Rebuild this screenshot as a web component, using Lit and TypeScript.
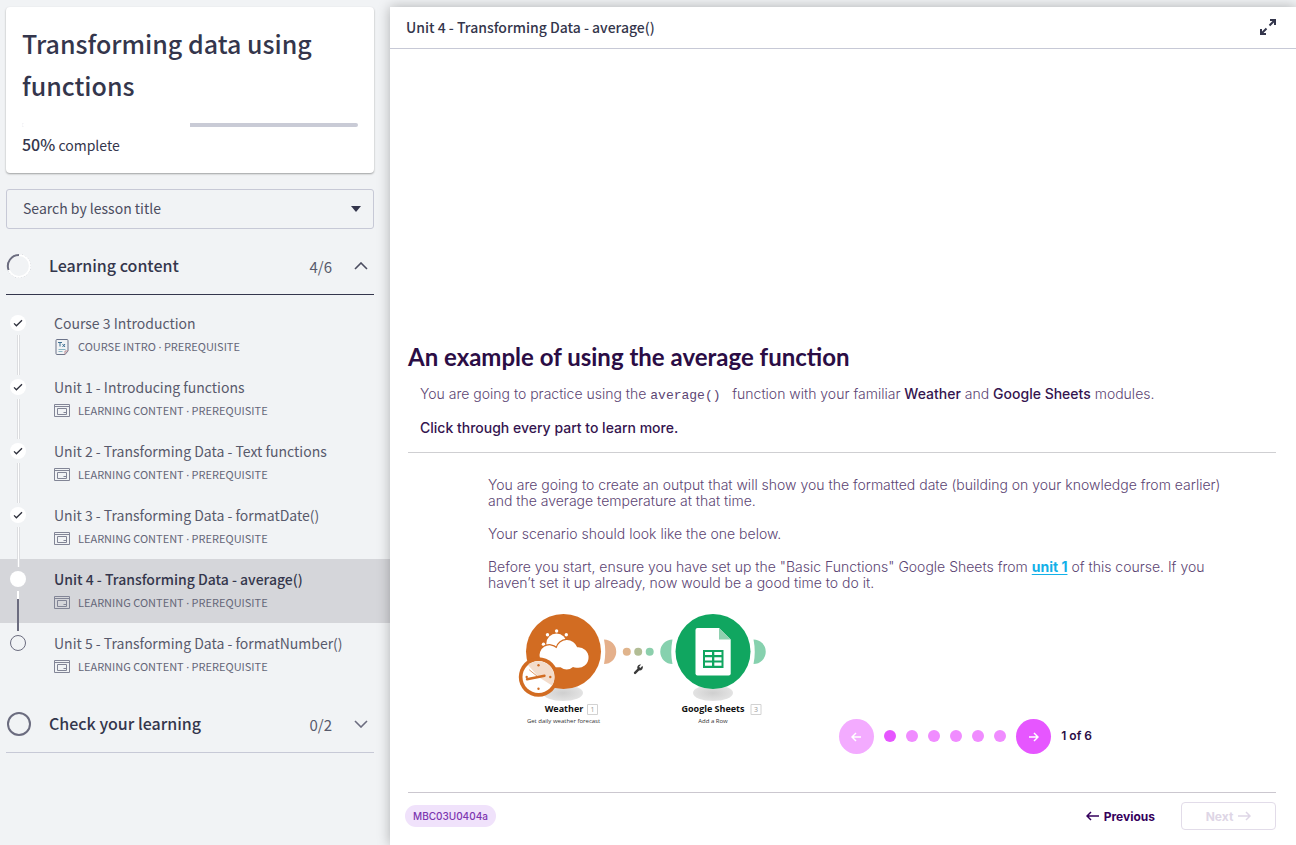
import { LitElement, html, css, svg } from "lit";
import { customElement, property, state } from "lit/decorators.js";
import { classMap } from "lit/directives/class-map.js";

type Status = "done" | "current" | "todo";

interface Lesson {
  title: string;
  kind: string;
  status: Status;
  icon: "text" | "content";
}

const LESSONS: Lesson[] = [
  { title: "Course 3 Introduction", kind: "COURSE INTRO", status: "done", icon: "text" },
  { title: "Unit 1 - Introducing functions", kind: "LEARNING CONTENT", status: "done", icon: "content" },
  { title: "Unit 2 - Transforming Data - Text functions", kind: "LEARNING CONTENT", status: "done", icon: "content" },
  { title: "Unit 3 - Transforming Data - formatDate()", kind: "LEARNING CONTENT", status: "done", icon: "content" },
  { title: "Unit 4 - Transforming Data - average()", kind: "LEARNING CONTENT", status: "current", icon: "content" },
  { title: "Unit 5 - Transforming Data - formatNumber()", kind: "LEARNING CONTENT", status: "todo", icon: "content" },
];

const textIcon = html`<svg class="kind-icon" viewBox="0 0 16 16" width="16" height="16" fill="none" stroke="#6c7389" aria-hidden="true">
  <path d="M3 .5h10q1 0 1 1V12l-3 3.500H3q-1 0-1-1V1.500q0-1 1-1z" />
  <path d="M14 12h-3v3.500" stroke="#b98a92" />
  <path d="M4 3.500h4M6 3.500V7.500M8.500 5l2.500 3M11 5L8.500 8" stroke="#3d6f92" />
  <path d="M4.500 10.500h7M4.500 12.500h4" stroke="#8bb6c4" />
</svg>`;

const contentIcon = html`<svg class="kind-icon" viewBox="0 0 16 16" width="16" height="16" fill="none" stroke="#828596" aria-hidden="true">
  <path d="M.5 1.500h15v12H.5zM.5 3.500h15" />
  <path d="M3.500 5.500h9v6h-9z" />
  <path d="M9.500 9.500h3" />
</svg>`;

@customElement("lesson-item")
class LessonItem extends LitElement {
  @property({ attribute: false }) lesson!: Lesson;
  @property({ type: Boolean }) last = false;

  static styles = css`
    :host { display: block; }
    .row {
      display: grid;
      grid-template-columns: 54px minmax(0, 1fr);
      height: 64px;
      color: #585a6c;
      text-decoration: none;
    }
    .row.current { background: #d5d6da; }
    .rail {
      display: flex;
      flex-direction: column;
      align-items: center;
      gap: 4px;
      width: 36px;
      padding-top: 12px;
      box-sizing: border-box;
    }
    .marker {
      flex: none;
      display: grid;
      place-items: center;
      width: 16px;
      height: 16px;
      border-radius: 50%;
      box-sizing: border-box;
      background: #fff;
    }
    .todo .marker { background: none; border: 1px solid #6b6c7f; }
    .line {
      flex: none;
      width: 1px;
      height: 40px;
      margin-bottom: -8px;
      border: solid #dcdde0;
      border-width: 0 1px;
      background: #fff;
    }
    .current .line {
      width: 2px;
      border: 0;
      background: linear-gradient(#fff 8px, #6b6c7f 8px);
    }
    .text { padding-top: 9px; }
    .title { font-size: 14px; line-height: 22px; }
    .current .title { font-weight: 500; color: #34364c; }
    .meta {
      display: flex;
      align-items: center;
      gap: 8px;
      margin-top: 2px;
      font-size: 11px;
      line-height: 20px;
      color: #646678;
    }
    .dot { font-family: "Noto Sans", sans-serif; }
    .kind-icon { flex: none; }
  `;

  render() {
    const l = this.lesson;
    return html`<a class=${classMap({ row: true, [l.status]: true })} href="#lesson" aria-current=${l.status === "current" ? "page" : "false"}>
      <span class="rail">
        <span class="marker">
          ${l.status === "done"
            ? html`<svg width="10" height="10" viewBox="0 0 10 10" fill="none" stroke="#2c2e3a" stroke-width="1.300" aria-hidden="true"><path d="M1 5.400l2.400 2.400L9 2.200" /></svg>`
            : ""}
        </span>
        ${this.last ? "" : html`<span class="line"></span>`}
      </span>
      <span class="text">
        <div class="title">${l.title}</div>
        <div class="meta">${l.icon === "text" ? textIcon : contentIcon}<span>${l.kind} <span class="dot">·</span> PREREQUISITE</span></div>
      </span>
    </a>`;
  }
}

@customElement("course-sidebar")
class CourseSidebar extends LitElement {
  static styles = css`
    :host { display: block; color: #34364c; }
    .card {
      margin: 7px 16px 16px 6px;
      padding: 15px 16px 17px;
      background: #fff;
      border-radius: 4px;
      box-shadow: 0 1px 2px rgba(0, 0, 0, 0.35);
    }
    h1 { margin: 0; font-size: 25px; line-height: 42px; font-weight: 500; }
    .bar {
      height: 4px;
      margin: 17px 0 7px;
      border-radius: 2px;
      background: #c9cbd6;
      overflow: hidden;
    }
    .fill { height: 100%; background: #fff; }
    .done { margin: 0; font-size: 14px; line-height: 22px; }
    .done b { font-size: 16px; line-height: 20px; font-weight: 500; }
    .search { display: grid; align-items: center; margin: 0 16px 9px 6px; }
    .search > * { grid-area: 1 / 1; }
    select {
      appearance: none;
      width: 100%;
      height: 40px;
      padding: 0 40px 2px 16px;
      font: inherit;
      font-size: 14px;
      color: #4b4d60;
      background: none;
      border: 1px solid #c7c9d6;
      border-radius: 3px;
    }
    .caret { justify-self: end; margin-right: 13px; pointer-events: none; }
    .section {
      display: grid;
      grid-template-columns: 43px minmax(0, 1fr) auto 14px;
      align-items: center;
      width: calc(100% - 22px);
      height: 57px;
      margin: 0 16px 0 6px;
      padding: 0 6px 0 0;
      border: 0;
      border-bottom: 1px solid #34364c;
      background: none;
      color: inherit;
      font: inherit;
      text-align: left;
    }
    .section.closed { border-bottom-color: #c7c9d6; }
    .name { padding-bottom: 2px; font-size: 16px; line-height: 24px; font-weight: 500; }
    .count { margin-right: 22px; font-size: 15px; color: #585a6c; }
    .lessons { list-style: none; margin: 0; padding: 8px 0 9px; }
  `;

  render() {
    return html`
      <div class="card">
        <h1>Transforming data using functions</h1>
        <div class="bar" role="progressbar" aria-label="Course progress" aria-valuenow="50"><div class="fill" style="width:50%"></div></div>
        <p class="done"><b>50%</b> complete</p>
      </div>
      <div class="search">
        <select aria-label="Search by lesson title"><option>Search by lesson title</option></select>
        <svg class="caret" width="10" height="6" viewBox="0 0 10 6" aria-hidden="true"><path d="M0 0h10L5 6z" fill="#34364c" /></svg>
      </div>
      <button class="section" aria-expanded="true">
        <svg width="26" height="26" viewBox="0 0 26 26" fill="none" aria-hidden="true">
          <circle cx="13" cy="13" r="11.500" stroke="#b9bac2" stroke-dasharray="1 2" />
          <circle cx="13" cy="13" r="10.800" stroke="#fff" stroke-width="1.800" />
          <path d="M2.600 17A11.100 11.100 0 0 1 13 2" stroke="#6b6c7f" stroke-width="2" />
        </svg>
        <span class="name">Learning content</span>
        <span class="count">4/6</span>
        <svg width="14" height="8" viewBox="0 0 14 8" fill="none" stroke="#4b4d60" stroke-width="1.600" aria-hidden="true"><path d="M1 7l6-6 6 6" /></svg>
      </button>
      <ul class="lessons">
        ${LESSONS.map((l, i) => html`<li><lesson-item .lesson=${l} ?last=${i === LESSONS.length - 1}></lesson-item></li>`)}
      </ul>
      <button class="section closed" aria-expanded="false">
        <svg width="26" height="26" viewBox="0 0 26 26" fill="none" aria-hidden="true"><circle cx="13" cy="13" r="11" stroke="#6b6c7f" stroke-width="2" /></svg>
        <span class="name">Check your learning</span>
        <span class="count">0/2</span>
        <svg width="14" height="8" viewBox="0 0 14 8" fill="none" stroke="#6b6c7f" stroke-width="1.600" aria-hidden="true"><path d="M1 1l6 6 6-6" /></svg>
      </button>
    `;
  }
}

@customElement("scenario-diagram")
class ScenarioDiagram extends LitElement {
  static styles = css`
    :host { display: block; }
    svg { display: block; }
    text { font-family: "Open Sans", sans-serif; text-anchor: middle; }
    .name { font-size: 9px; font-weight: 700; fill: #111; }
    .sub { font-size: 6px; fill: #333; }
    .num { font-size: 7px; fill: #999; }
  `;

  render() {
    return html`<svg width="270" height="120" viewBox="510 610 270 120" role="img" aria-label="Weather module connected to Google Sheets module">
      <defs>
        <radialGradient id="shade"><stop offset="0" stop-color="#cfcfcf" /><stop offset="1" stop-color="#e3e3e3" /></radialGradient>
      </defs>
      <ellipse cx="563" cy="693" rx="20" ry="8" fill="url(#shade)" />
      <ellipse cx="713" cy="693" rx="20" ry="8" fill="url(#shade)" />
      <path d="M604 639.500a12.250 12.250 0 0 1 0 24.500q2.500-12 0-24.500z" fill="#e5b08b" />
      <circle cx="626.800" cy="651.700" r="4" fill="#e0b48c" />
      <circle cx="638.200" cy="651.700" r="4" fill="#b2bd95" />
      <circle cx="649.700" cy="651.700" r="4" fill="#8ccfac" />
      <path d="M672.500 639.500a12.250 12.250 0 0 0 0 24.500q-2.500-12 0-24.500z" fill="#86d1ae" />
      <path d="M753.500 639.500a12.250 12.250 0 0 1 0 24.500q2.500-12 0-24.500z" fill="#86d1ae" />
      <circle cx="563.500" cy="651.500" r="37.500" fill="#d26c22" />
      <circle cx="713" cy="651.500" r="37.500" fill="#10a660" />
      <g fill="#fff">
        <circle cx="556.500" cy="643.700" r="10.200" />
        <circle cx="543.500" cy="644.300" r="1.700" /><circle cx="547.500" cy="634.700" r="1.700" />
        <circle cx="556.600" cy="631" r="1.700" /><circle cx="566.300" cy="634.700" r="1.700" />
      </g>
      <path stroke="#d26c22" stroke-width="2.400" fill="#fff" paint-order="stroke" d="M540 658.500a10 10 0 0 1 16.500-10.300 10.800 10.800 0 0 1 20.700-.9 10.300 10.300 0 1 1-.7 20.400q-2 0-3.500-.8-6 5-12.500.3l-20.500.3z" />
      <circle cx="538.500" cy="677" r="19.700" fill="#d26c22" />
      <circle cx="538.500" cy="677" r="16" fill="#fff" />
      <path d="M538.500 677L528 665a16 16 0 0 1 24 20.500z" fill="#f3dccb" />
      <g stroke="#d26c22" fill="none" stroke-linecap="round">
        <path d="M527 679.300l17.500-3.600" stroke-width="2.400" />
        <path d="M529.500 670l8 6.500" stroke-width=".7" />
      </g>
      <g fill="#d26c22"><circle cx="538.500" cy="665.200" r="1.200" /><circle cx="538.500" cy="688.700" r="1.200" /><circle cx="550.300" cy="677" r="1.200" /><circle cx="526.700" cy="677" r="1.200" /></g>
      <path d="M642.500 665.700l-2.200 2.200-1.200-1.200 2-2.200a3.300 3.300 0 0 0-3.700 4.300l-3.200 3.200a1.200 1.200 0 1 0 1.700 1.700l3.200-3.200a3.300 3.300 0 0 0 3.400-4.800z" fill="#3a3a3a" />
      <path d="M697.500 628h21.500l11.700 11.500v34q0 2-2 2h-31.200q-2 0-2-2V630q0-2 2-2z" fill="#fff" />
      <path d="M719 628l11.700 11.500H719z" fill="#8fd0b0" />
      <path fill-rule="evenodd" fill="#10a660" d="M703 650h20.500v18H703zM705 652v3h7v-3zM714.300 652v3h7.200v-3zM705 657.200v3.200h7v-3.200zM714.300 657.200v3.200h7.200v-3.200zM705 662.600v3.200h7v-3.200zM714.300 662.600v3.200h7.200v-3.200z" />
      <text class="name" x="564" y="712">Weather</text>
      <text class="name" x="713" y="712">Google Sheets</text>
      <text class="sub" x="563.500" y="723">Get daily weather forecast</text>
      <text class="sub" x="713" y="723">Add a Row</text>
      <g fill="none" stroke="#d2d2d2"><path d="M587.500 704.500h10v10h-10zM751 704.500h10v10h-10z" /></g>
      <text class="num" x="592.500" y="712">1</text>
      <text class="num" x="756" y="712">3</text>
    </svg>`;
  }
}

const arrow = (right: boolean, w: number) => svg`<path d=${right ? `M1 5h${w - 2}M${w - 5} 1l4 4-4 4` : `M${w - 1} 5H1M5 1L1 5l4 4`} />`;

@customElement("lesson-view")
class LessonView extends LitElement {
  @state() private step = 0;

  static styles = css`
    :host {
      display: flex;
      flex-direction: column;
      background: #fff;
      font-family: Inter, sans-serif;
      color: #5c4573;
    }
    header {
      display: flex;
      align-items: center;
      justify-content: space-between;
      height: 42px;
      box-sizing: border-box;
      padding: 0 19px 2px 16px;
      border-bottom: 1px solid #c7c9d6;
      font-family: "Noto Sans CJK SC", sans-serif;
      color: #34364c;
    }
    header h2 { margin: 0; font-size: 14px; line-height: 22px; font-weight: 500; }
    button { padding: 0; border: 0; background: none; font: inherit; color: inherit; }
    svg { display: block; }
    .page { margin-top: auto; padding: 0 20px 15px 18px; }
    h3 {
      margin: 0;
      font-family: Lato, sans-serif;
      font-size: 24px;
      line-height: 30px;
      font-weight: 700;
      color: #2b0d45;
    }
    p { margin: 0; font-size: 14px; font-weight: 300; }
    b { font-weight: 500; color: #35154f; }
    code { font-family: "Liberation Mono", monospace; font-size: 13px; line-height: 16px; }
    .intro { padding: 12px 12px 14px; border-bottom: 1px solid #cfcfd2; }
    .intro p { line-height: 20px; }
    .intro p + p { margin-top: 14px; }
    .slide { padding: 24px 44px 0 80px; }
    .slide p { line-height: 16px; margin-bottom: 17px; }
    .slide a { color: #12b0e8; font-weight: 700; text-underline-offset: 2px; }
    .figure { margin: 19px 0 0 22px; }
    .pager {
      display: flex;
      align-items: center;
      justify-content: flex-end;
      gap: 10px;
      margin: -11px 184px 39px 0;
      font-size: 12px;
      line-height: 16px;
      font-weight: 600;
      color: #2b0d45;
    }
    .dots { display: flex; gap: 10px; }
    .dot { width: 12px; height: 12px; border-radius: 50%; background: #f08cff; }
    .dot.on { background: #e656ff; }
    .round {
      display: grid;
      place-items: center;
      width: 35px;
      height: 35px;
      margin-bottom: -1px;
      border-radius: 50%;
      background: #e656ff;
    }
    .round:disabled { background: #f3abff; }
    footer {
      display: flex;
      align-items: center;
      padding-top: 9px;
      border-top: 1px solid #cbc7cf;
    }
    .code {
      margin-left: -3px;
      margin-right: auto;
      padding: 0 8px;
      border-radius: 11px;
      background: #f0e2fb;
      font-size: 10px;
      line-height: 22px;
      font-weight: 500;
      color: #7c35b0;
    }
    .nav {
      display: flex;
      align-items: center;
      justify-content: center;
      gap: 4px;
      height: 28px;
      font-size: 12px;
      font-weight: 700;
      color: #35005c;
    }
    .next {
      width: 95px;
      margin-left: 26px;
      border: 1px solid #e2dce9;
      border-radius: 4px;
      color: #ded6e6;
    }
  `;

  render() {
    return html`
      <header>
        <h2>Unit 4 - Transforming Data - average()</h2>
        <button aria-label="Full screen">
          <svg width="18" height="18" viewBox="0 0 18 18" fill="none" stroke="#34364c" stroke-width="2" aria-hidden="true">
            <path d="M10.500 7.500L16 2M11 2h5v5M7.500 10.500L2 16M7 16H2v-5" />
          </svg>
        </button>
      </header>
      <div class="page">
        <h3>An example of using the average function</h3>
        <div class="intro">
          <p>You are going to practice using the <code>average()&nbsp;</code> function with your familiar <b>Weather</b> and <b>Google Sheets</b> modules.</p>
          <p><b>Click through every part to learn more.</b></p>
        </div>
        <div class="slide">
          <p>You are going to create an output that will show you the formatted date (building on your knowledge from earlier) and the average temperature at that time.</p>
          <p>Your scenario should look like the one below.</p>
          <p>Before you start, ensure you have set up the "Basic Functions" Google Sheets from <a href="#unit-1">unit 1</a> of this course. If you haven’t set it up already, now would be a good time to do it.</p>
          <scenario-diagram class="figure"></scenario-diagram>
        </div>
        <div class="pager">
          <button class="round" aria-label="Previous part" ?disabled=${this.step === 0} @click=${() => this.step--}>
            <svg width="11" height="10" viewBox="0 0 11 10" fill="none" stroke="#fff" stroke-width="1.500">${arrow(false, 11)}</svg>
          </button>
          <div class="dots">
            ${[0, 1, 2, 3, 4, 5].map((i) => html`<button class=${classMap({ dot: true, on: i === this.step })} aria-label="Part ${i + 1}" @click=${() => (this.step = i)}></button>`)}
          </div>
          <button class="round" aria-label="Next part" @click=${() => (this.step = Math.min(5, this.step + 1))}>
            <svg width="11" height="10" viewBox="0 0 11 10" fill="none" stroke="#fff" stroke-width="1.500">${arrow(true, 11)}</svg>
          </button>
          <span>${this.step + 1} of 6</span>
        </div>
        <footer>
          <span class="code">MBC03U0404a</span>
          <button class="nav"><svg width="14" height="10" viewBox="0 0 14 10" fill="none" stroke="currentColor" stroke-width="1.500">${arrow(false, 14)}</svg>Previous</button>
          <button class="nav next" disabled>Next<svg width="14" height="10" viewBox="0 0 14 10" fill="none" stroke="currentColor" stroke-width="1.500">${arrow(true, 14)}</svg></button>
        </footer>
      </div>
    `;
  }
}

@customElement("app-root")
class AppRoot extends LitElement {
  static styles = css`
    :host {
      display: grid;
      grid-template-columns: 390px minmax(0, 1fr);
      min-height: 100vh;
      overflow: hidden;
      background: #f1f3f5;
      font-family: "Noto Sans CJK SC", sans-serif;
    }
    .view {
      position: relative;
      margin-top: 7px;
      box-shadow: 0 0 12px rgba(0, 0, 0, 0.28);
    }
  `;

  render() {
    return html`<course-sidebar></course-sidebar><lesson-view class="view"></lesson-view>`;
  }
}
